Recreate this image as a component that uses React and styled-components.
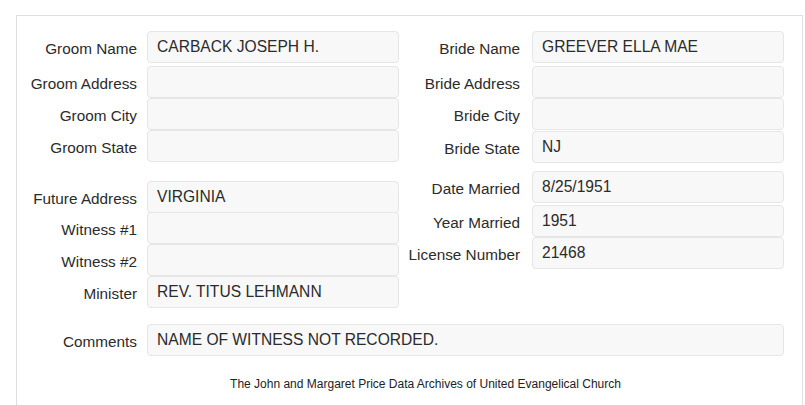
import React from "react";
import styled, { createGlobalStyle } from "styled-components";

const Global = createGlobalStyle`
  html, body { margin: 0; padding: 0; background: #fff; }
  body { font-family: "Liberation Sans", Arial, sans-serif; color: #333; overflow: hidden; }
`;

const Page = styled.div`
  padding: 15px 0 0 16px;
  width: 787px;
  height: 390px;
`;

const Panel = styled.div`
  border: 1px solid #dedede;
  border-bottom: none;
  height: 100%;
  box-sizing: border-box;
`;

const Columns = styled.div`
  display: grid;
  grid-template-columns: 382px 384px;
  column-gap: 1px;
  align-items: start;
  padding-top: ${(p) => p.$top}px;
`;

const Column = styled.div`
  display: flex;
  flex-direction: column;
  padding-top: ${(p) => p.$top || 0}px;
`;

const Row = styled.div`
  display: grid;
  grid-template-columns: 120px ${(p) => p.$input || 252}px;
  column-gap: ${(p) => p.$gap || 10}px;
  margin-top: ${(p) => p.$mt || 0}px;
  height: 32px;
`;

const Label = styled.div`
  box-sizing: border-box;
  height: 32px;
  text-align: right;
  font-size: 15.3px;
  line-height: 28px;
  padding-top: 4px;
  white-space: nowrap;
  color: #2b2b2b;
`;

const Value = styled.div`
  box-sizing: border-box;
  height: 32px;
  line-height: 30px;
  padding: 0 9px;
  font-size: 15.6px;
  color: #2b2b2b;
  background: #f8f8f8;
  border: 1px solid #e6e6e6;
  border-radius: 4px;
  white-space: nowrap;
  overflow: hidden;
`;

const CommentsRow = styled.div`
  margin-top: ${(p) => p.$mt}px;
`;

const Footer = styled.div`
  margin-top: 20px;
  padding-left: 32px;
  text-align: center;
  font-size: 12px;
  line-height: 16px;
  color: #222;
`;

const Field = ({ label, value, mt, gap }) => (
  <Row $mt={mt} $gap={gap}>
    <Label>{label}</Label>
    <Value>{value}</Value>
  </Row>
);

export default function App() {
  return (
    <>
      <Global />
      <Page>
        <Panel>
          <Columns $top={15}>
            <Column>
              <Field label="Groom Name" value="CARBACK JOSEPH H." />
              <Field label="Groom Address" value="" mt={3} />
              <Field label="Groom City" value="" />
              <Field label="Groom State" value="" />
            </Column>
            <Column>
              <Field label="Bride Name" value="GREEVER ELLA MAE" gap={12} />
              <Field label="Bride Address" value="" mt={3} gap={12} />
              <Field label="Bride City" value="" gap={12} />
              <Field label="Bride State" value="NJ" gap={12} mt={1} />
            </Column>
          </Columns>
          <Columns $top={0}>
            <Column $top={18}>
              <Field label="Future Address" value="VIRGINIA" />
              <Field label="Witness #1" value="" mt={-1} />
              <Field label="Witness #2" value="" />
              <Field label="Minister" value="REV. TITUS LEHMANN" />
            </Column>
            <Column $top={8}>
              <Field label="Date Married" value="8/25/1951" gap={12} />
              <Field label="Year Married" value="1951" gap={12} mt={2} />
              <Field label="License Number" value="21468" gap={12} />
            </Column>
          </Columns>
          <CommentsRow $mt={16}>
            <Row $input={637}>
              <Label>Comments</Label>
              <Value>NAME OF WITNESS NOT RECORDED.</Value>
            </Row>
          </CommentsRow>
          <Footer>The John and Margaret Price Data Archives of United Evangelical Church</Footer>
        </Panel>
      </Page>
    </>
  );
}
